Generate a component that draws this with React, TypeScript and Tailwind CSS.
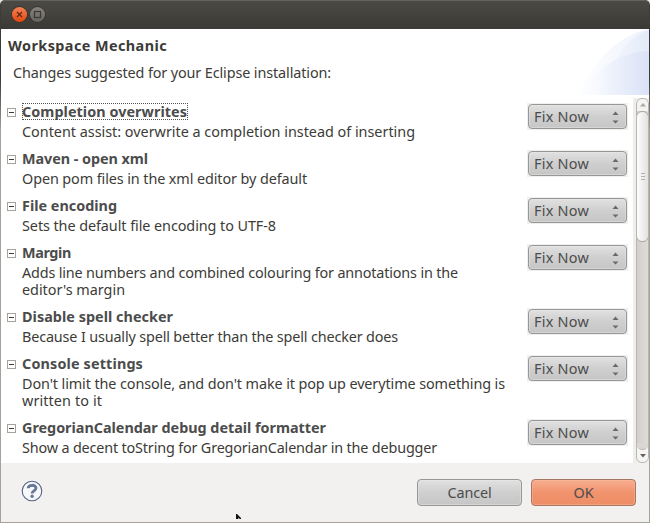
import { useLayoutEffect, useRef, useState } from "react";

type Line = { text: string; width: number };
type Fix = { title: Line; lines: Line[] };

const FIXES: Fix[] = [
  {
    title: { text: "Completion overwrites", width: 165 },
    lines: [{ text: "Content assist: overwrite a completion instead of inserting", width: 393 }],
  },
  {
    title: { text: "Maven - open xml", width: 126 },
    lines: [{ text: "Open pom files in the xml editor by default", width: 285 }],
  },
  {
    title: { text: "File encoding", width: 95 },
    lines: [{ text: "Sets the default file encoding to UTF-8", width: 254 }],
  },
  {
    title: { text: "Margin", width: 49 },
    lines: [
      { text: "Adds line numbers and combined colouring for annotations in the", width: 436 },
      { text: "editor's margin", width: 103 },
    ],
  },
  {
    title: { text: "Disable spell checker", width: 151 },
    lines: [{ text: "Because I usually spell better than the spell checker does", width: 376 }],
  },
  {
    title: { text: "Console settings", width: 121 },
    lines: [
      { text: "Don't limit the console, and don't make it pop up everytime something is", width: 483 },
      { text: "written to it", width: 80 },
    ],
  },
  {
    title: { text: "GregorianCalendar debug detail formatter", width: 304 },
    lines: [{ text: "Show a decent toString for GregorianCalendar in the debugger", width: 415 }],
  },
];

/** Text tracked so that it spans the given width. */
function Tracked({ text, width }: Line) {
  const ref = useRef<HTMLSpanElement>(null);
  const [spacing, setSpacing] = useState(0);
  useLayoutEffect(() => {
    if (ref.current) {
      const natural = ref.current.getBoundingClientRect().width;
      setSpacing((width - natural) / text.length);
    }
  }, []);
  return (
    <span ref={ref} className="inline-block whitespace-nowrap" style={{ letterSpacing: spacing }}>
      {text}
    </span>
  );
}

function TitleBar() {
  return (
    <div className="flex h-[29px] shrink-0 items-start gap-px rounded-t-[5px] border-t border-[#65635d] bg-linear-to-b from-[#4a4944] via-[#43423d] to-[#3a3935] pl-[10px] pt-[5px]">
      <svg width="17" height="17" viewBox="0 0 17 17">
        <defs>
          <linearGradient id="close" x2="0" y2="1">
            <stop offset="0" stopColor="#f78154" />
            <stop offset="1" stopColor="#e0480f" />
          </linearGradient>
        </defs>
        <circle cx="8.5" cy="8.5" r="8.3" fill="#32312d" />
        <circle cx="8.5" cy="8.5" r="7.6" fill="url(#close)" />
        <path d="M6 6l5 5M11 6l-5 5" stroke="#5b2a15" strokeWidth="1.3" />
      </svg>
      <svg width="17" height="17" viewBox="0 0 17 17">
        <defs>
          <linearGradient id="max" x2="0" y2="1">
            <stop offset="0" stopColor="#85827b" />
            <stop offset="1" stopColor="#66645d" />
          </linearGradient>
        </defs>
        <circle cx="8.5" cy="8.5" r="8.3" fill="#32312d" />
        <circle cx="8.5" cy="8.5" r="7.6" fill="url(#max)" />
        <rect x="5.5" y="5.5" width="6" height="6" fill="none" stroke="#393832" strokeWidth="1.2" />
      </svg>
    </div>
  );
}

function Header() {
  return (
    <div className="flex h-[66px] shrink-0 justify-between bg-white text-[#3c3b37]">
      <div className="pl-[7px] pt-[8px]">
        <div className="h-[17px] font-bold">
          <Tracked text="Workspace Mechanic" width={159} />
        </div>
        <div className="mt-[10px] h-[17px] pl-[5px]">
          <Tracked text="Changes suggested for your Eclipse installation:" width={318} />
        </div>
      </div>
      <svg width="76" height="66" viewBox="0 0 76 66">
        <defs>
          <linearGradient id="arcBack" gradientUnits="userSpaceOnUse" x1="4" x2="76">
            <stop offset="0" stopColor="#ffffff" />
            <stop offset="0.5" stopColor="#f6f8fd" />
            <stop offset="1" stopColor="#eff3fc" />
          </linearGradient>
          <linearGradient id="arcMid" gradientUnits="userSpaceOnUse" x1="34" x2="76">
            <stop offset="0" stopColor="#f4f7fd" />
            <stop offset="1" stopColor="#e4eaf9" />
          </linearGradient>
          <linearGradient id="arcFront" gradientUnits="userSpaceOnUse" x1="4" x2="76">
            <stop offset="0" stopColor="#ffffff" />
            <stop offset="0.25" stopColor="#f8fafe" />
            <stop offset="0.55" stopColor="#ebf0fb" />
            <stop offset="1" stopColor="#d9e2f6" />
          </linearGradient>
        </defs>
        <path d="M4 66C20 35 43 6 76 0V66Z" fill="url(#arcBack)" />
        <path d="M36 50C42 25 58 6 76 1V66H36Z" fill="url(#arcMid)" />
        <path d="M4 66C22 40 46 23 76 22V66Z" fill="url(#arcFront)" />
      </svg>
    </div>
  );
}

function Collapse() {
  return (
    <svg className="mt-[5px] shrink-0" width="9" height="9" viewBox="0 0 9 9">
      <rect x="0.5" y="0.5" width="8" height="8" fill="#fff" stroke="#a6a39d" />
      <path d="M2 4.5h5" stroke="#3c3b37" />
    </svg>
  );
}

function FixCombo() {
  return (
    <div className="h-[27px] w-[101px] shrink-0 bg-[#f0efee] p-px">
      <div className="flex h-[25px] items-center justify-between rounded-[4px] border border-[#989794] bg-linear-to-b from-[#e1e1e1] via-[#cfcfcf] to-[#c6c6c6] pl-[5px] pr-[7px] text-[#4c4c4c] shadow-[inset_0_0_0_1px_rgba(235,235,235,0.4)]">
        <Tracked text="Fix Now" width={55} />
        <svg className="mt-[2px]" width="7" height="13" viewBox="0 0 7 13">
          <path d="M0.5 4h6L3.5 0.6zM0.5 9.4h6L3.5 12.6z" fill="#696969" />
        </svg>
      </div>
    </div>
  );
}

function FixRow({ fix, focused }: { fix: Fix; focused: boolean }) {
  return (
    <div className="flex items-start">
      <Collapse />
      <div className="ml-[6px] grow">
        <div className="flex h-[17px] font-bold text-[#4c4c4c]">
          <div className={focused ? "h-[17px] w-[166px] outline-1 -outline-offset-1 outline-dotted outline-[#55534f]" : "h-[17px]"}>
            <Tracked {...fix.title} />
          </div>
        </div>
        <div className="mt-[3px] text-[#3c3b37]">
          {fix.lines.map((line) => (
            <div key={line.text} className="h-[17px]">
              <Tracked {...line} />
            </div>
          ))}
        </div>
      </div>
      <FixCombo />
    </div>
  );
}

function ScrollBar() {
  return (
    <div className="mt-[3px] w-[16px] shrink-0 bg-[#efeeec] pl-[3px]">
      <div className="flex h-[365px] w-[13px] flex-col items-center overflow-hidden rounded-[6px] border border-[#b9b6b2] bg-linear-to-r from-[#d3cfcc] to-[#dedbd9]">
        <div className="flex h-[12px] w-full shrink-0 items-center justify-center bg-[#f4f3f2]">
          <svg width="6" height="4" viewBox="0 0 6 4">
            <path d="M0 3.5h6L3 0z" fill="#aaa7a4" />
          </svg>
        </div>
        <div className="flex h-[131px] w-[13px] shrink-0 flex-col items-center justify-center gap-[2px] rounded-[6px] border border-[#aaa6a1] bg-linear-to-r from-[#fdfdfd] to-[#e4e2e0]">
          <div className="h-px w-[4px] bg-[#b4b1ad]" />
          <div className="h-px w-[4px] bg-[#b4b1ad]" />
          <div className="h-px w-[4px] bg-[#b4b1ad]" />
        </div>
        <div className="grow" />
        <div className="w-full bg-[#f6f5f4]">
          <div className="h-[7px] rounded-b-[6px] border-b border-[#b9b6b2] bg-[#dad7d5]" />
        </div>
        <div className="flex h-[12px] w-full shrink-0 items-center justify-center bg-[#f6f5f4]">
          <svg width="6" height="4" viewBox="0 0 6 4">
            <path d="M0 0h6L3 3.5z" fill="#65625e" />
          </svg>
        </div>
      </div>
    </div>
  );
}

function Footer() {
  return (
    <div className="flex h-[59px] shrink-0 items-start bg-[#f2f1f0] text-[#4c4c4c]">
      <svg className="ml-[20px] mt-[17px]" width="22" height="22" viewBox="0 0 22 22">
        <circle cx="11" cy="11" r="9.8" fill="#f8f8fa" stroke="#516485" strokeWidth="1.1" />
        <path
          d="M7.2 8.3C7.2 4.3 15 4.3 15 8.1c0 2.5-3.9 2.9-3.9 5.3"
          fill="none"
          stroke="#667799"
          strokeWidth="2.8"
        />
        <circle cx="11.1" cy="16.3" r="1.7" fill="#667799" />
      </svg>
      <svg className="ml-[193px] mt-[51px]" width="6" height="5" viewBox="0 0 6 5">
        <path d="M0 0H1L5 4V5H3.8L2.4 3.4V5H0z" fill="#111" />
      </svg>
      <div className="grow" />
      <button className="mt-[16px] flex h-[27px] w-[105px] items-center justify-center rounded-[4px] border border-[#989794] bg-linear-to-b from-[#e1e1e1] via-[#cfcfcf] to-[#c6c6c6] shadow-[inset_0_0_0_1px_rgba(235,235,235,0.4)]">
        <Tracked text="Cancel" width={44} />
      </button>
      <button className="ml-[9px] mr-[13px] mt-[16px] flex h-[27px] w-[105px] items-center justify-center rounded-[4px] border border-[#a67666] bg-linear-to-b from-[#f8ae91] via-[#f1936e] to-[#ee8d66] shadow-[inset_0_0_0_1px_rgba(255,190,160,0.4)]">
        <Tracked text="OK" width={20} />
      </button>
    </div>
  );
}

export default function App() {
  return (
    <div className="h-[523px] w-[650px] overflow-hidden bg-[#e8e8e8] font-['Noto_Sans',sans-serif] text-[14.4px] leading-[17px]">
      <div className="flex h-[523px] flex-col overflow-hidden rounded-t-[5px] bg-linear-to-b from-[#3c3b37] from-15% to-[#a5a19b] to-25% px-px pb-px">
        <TitleBar />
        <Header />
        <div className="flex h-[368px] shrink-0 overflow-hidden bg-white">
          <div className="flex grow flex-col gap-[10px] pl-[6px] pr-[5px] pt-[8px]">
            {FIXES.map((fix, i) => (
              <FixRow key={fix.title.text} fix={fix} focused={i === 0} />
            ))}
          </div>
          <ScrollBar />
        </div>
        <Footer />
      </div>
    </div>
  );
}
